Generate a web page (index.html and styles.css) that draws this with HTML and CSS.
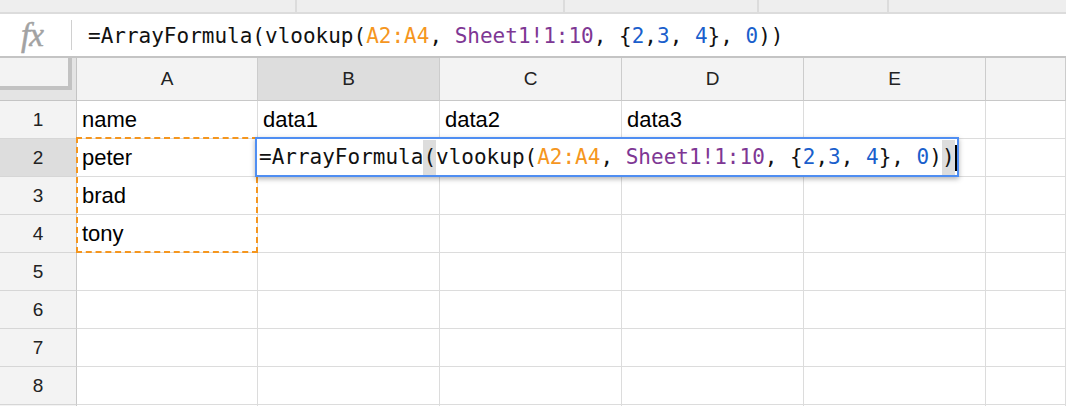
FILE: index.html
```html
<!DOCTYPE html>
<html>
<head>
<meta charset="utf-8">
<link rel="stylesheet" href="styles.css">
</head>
<body>
<div class="topstrip">
  <div class="seg s1"></div>
  <div class="seg s2"></div>
  <div class="seg s3"></div>
  <div class="seg s4"></div>
  <div class="seg s5"></div>
</div>
<div class="formulabar">
  <div class="fx">fx</div>
  <div class="fdivider"></div>
  <div class="ftext code">=ArrayFormula(vlookup(<span class="ref">A2:A4</span>, <span class="sheet">Sheet1!1:10</span>, {<span class="num">2</span>,<span class="num">3</span>, <span class="num">4</span>}, <span class="num">0</span>))</div>
</div>
<div class="sheetwrap">
  <div class="grid">
    <div class="corner"><div class="corner-inner"></div></div>
    <div class="colh">A</div>
    <div class="colh sel">B</div>
    <div class="colh">C</div>
    <div class="colh">D</div>
    <div class="colh">E</div>
    <div class="colh"></div>

    <div class="rowh">1</div>
    <div class="cell">name</div>
    <div class="cell">data1</div>
    <div class="cell">data2</div>
    <div class="cell">data3</div>
    <div class="cell"></div>
    <div class="cell"></div>

    <div class="rowh sel">2</div>
    <div class="cell">peter</div>
    <div class="cell"></div>
    <div class="cell"></div>
    <div class="cell"></div>
    <div class="cell"></div>
    <div class="cell"></div>

    <div class="rowh">3</div>
    <div class="cell">brad</div>
    <div class="cell"></div>
    <div class="cell"></div>
    <div class="cell"></div>
    <div class="cell"></div>
    <div class="cell"></div>

    <div class="rowh">4</div>
    <div class="cell">tony</div>
    <div class="cell"></div>
    <div class="cell"></div>
    <div class="cell"></div>
    <div class="cell"></div>
    <div class="cell"></div>

    <div class="rowh">5</div>
    <div class="cell"></div><div class="cell"></div><div class="cell"></div><div class="cell"></div><div class="cell"></div><div class="cell"></div>
    <div class="rowh">6</div>
    <div class="cell"></div><div class="cell"></div><div class="cell"></div><div class="cell"></div><div class="cell"></div><div class="cell"></div>
    <div class="rowh">7</div>
    <div class="cell"></div><div class="cell"></div><div class="cell"></div><div class="cell"></div><div class="cell"></div><div class="cell"></div>
    <div class="rowh">8</div>
    <div class="cell"></div><div class="cell"></div><div class="cell"></div><div class="cell"></div><div class="cell"></div><div class="cell"></div>
    <div class="rowh last"></div>
    <div class="cell last"></div><div class="cell last"></div><div class="cell last"></div><div class="cell last"></div><div class="cell last"></div><div class="cell last"></div>
  </div>
  <div class="copy-range"></div>
  <div class="editor code">=ArrayFormula<span class="match">(</span>vlookup(<span class="ref">A2:A4</span>, <span class="sheet">Sheet1!1:10</span>, {<span class="num">2</span>,<span class="num">3</span>, <span class="num">4</span>}, <span class="num">0</span>)<span class="match">)</span><span class="caret"></span></div>
</div>
</body>
</html>
```

FILE: styles.css
```css
html, body {
  margin: 0;
  padding: 0;
  background: #ffffff;
  overflow: hidden;
}
body {
  width: 1066px;
  height: 406px;
  font-family: "Liberation Sans", Arial, sans-serif;
  color: #000;
}

.topstrip {
  display: flex;
  height: 12px;
  background: #eeeeee;
  border-bottom: 2px solid #dcdcdc;
}
.seg {
  height: 100%;
  border-right: 2px solid #dcdcdc;
  box-sizing: border-box;
}
.s1 { width: 297px; }
.s2 { width: 268px; }
.s3 { width: 194px; }
.s4 { width: 130px; }
.s5 { flex: 1; border-right: none; }

.formulabar {
  display: flex;
  align-items: center;
  height: 42px;
  border-bottom: 2px solid #c4c4c4;
  background: #fff;
}
.fx {
  width: 64px;
  text-align: center;
  font-family: "Liberation Serif", "Times New Roman", serif;
  font-style: italic;
  font-size: 33px;
  color: #a2a2a2;
  line-height: 42px;
  letter-spacing: -1px;
  -webkit-text-stroke: 0.5px #a2a2a2;
}
.fdivider {
  width: 1px;
  height: 30px;
  background: #d0d0d0;
  margin-left: 7px;
}
.ftext {
  align-self: flex-start;
  padding-left: 16px;
  padding-top: 1px;
  white-space: pre;
  line-height: 42px;
  font-size: 20.9px;
}

.code {
  font-family: "DejaVu Sans Mono", "Liberation Mono", monospace;
  font-size: 21px;
  color: #111;
}
.ref { color: #f5961e; }
.sheet { color: #7e3794; }
.num { color: #1a5fcc; }

.sheetwrap {
  position: relative;
}
.grid {
  display: grid;
  grid-template-columns: 77px 181px 182px 182px 182px 182px 1fr;
  grid-template-rows: 43px repeat(8, 38px) 1px;
}
.corner {
  background: #e4e4e4;
  border-right: 1px solid #c4c4c4;
  border-bottom: 1px solid #c4c4c4;
  box-sizing: border-box;
}
.corner-inner {
  width: 72px;
  height: 32px;
  background: #f3f3f3;
  border-right: 4px solid #c2c2c2;
  border-bottom: 4px solid #c2c2c2;
  box-sizing: border-box;
}
.colh {
  background: #f3f3f3;
  border-right: 1px solid #cccccc;
  border-bottom: 1px solid #c8c8c8;
  box-sizing: border-box;
  display: flex;
  align-items: center;
  justify-content: center;
  font-size: 19px;
  color: #222;
}
.colh.sel, .rowh.sel {
  background: #dddddd;
}
.rowh {
  background: #f3f3f3;
  border-right: 1px solid #c8c8c8;
  border-bottom: 1px solid #d6d6d6;
  box-sizing: border-box;
  display: flex;
  align-items: center;
  justify-content: center;
  font-size: 19px;
  color: #222;
}
.cell {
  border-right: 1px solid #dcdcdc;
  border-bottom: 1px solid #dcdcdc;
  box-sizing: border-box;
  display: flex;
  align-items: center;
  padding-left: 5px;
  font-size: 22px;
  color: #000;
  white-space: nowrap;
  overflow: hidden;
}
.rowh.last, .cell.last {
  border-bottom: none;
}

.copy-range {
  position: absolute;
  left: 76px;
  top: 79px;
  width: 182px;
  height: 116px;
  border: 2px dashed #f5961e;
  box-sizing: border-box;
  pointer-events: none;
}

.editor {
  position: absolute;
  left: 255px;
  top: 79px;
  width: 704px;
  height: 40px;
  box-sizing: border-box;
  border: 2px solid #4f8ef2;
  background: #fff;
  box-shadow: 0 2px 5px rgba(0, 0, 0, 0.3);
  padding-left: 2px;
  padding-top: 1px;
  line-height: 35px;
  white-space: pre;
  display: flex;
  align-items: center;
  overflow: visible;
}
.match {
  background: #dddddd;
}
.caret {
  flex: none;
  display: inline-block;
  width: 2px;
  height: 26px;
  background: #000;
}
```
